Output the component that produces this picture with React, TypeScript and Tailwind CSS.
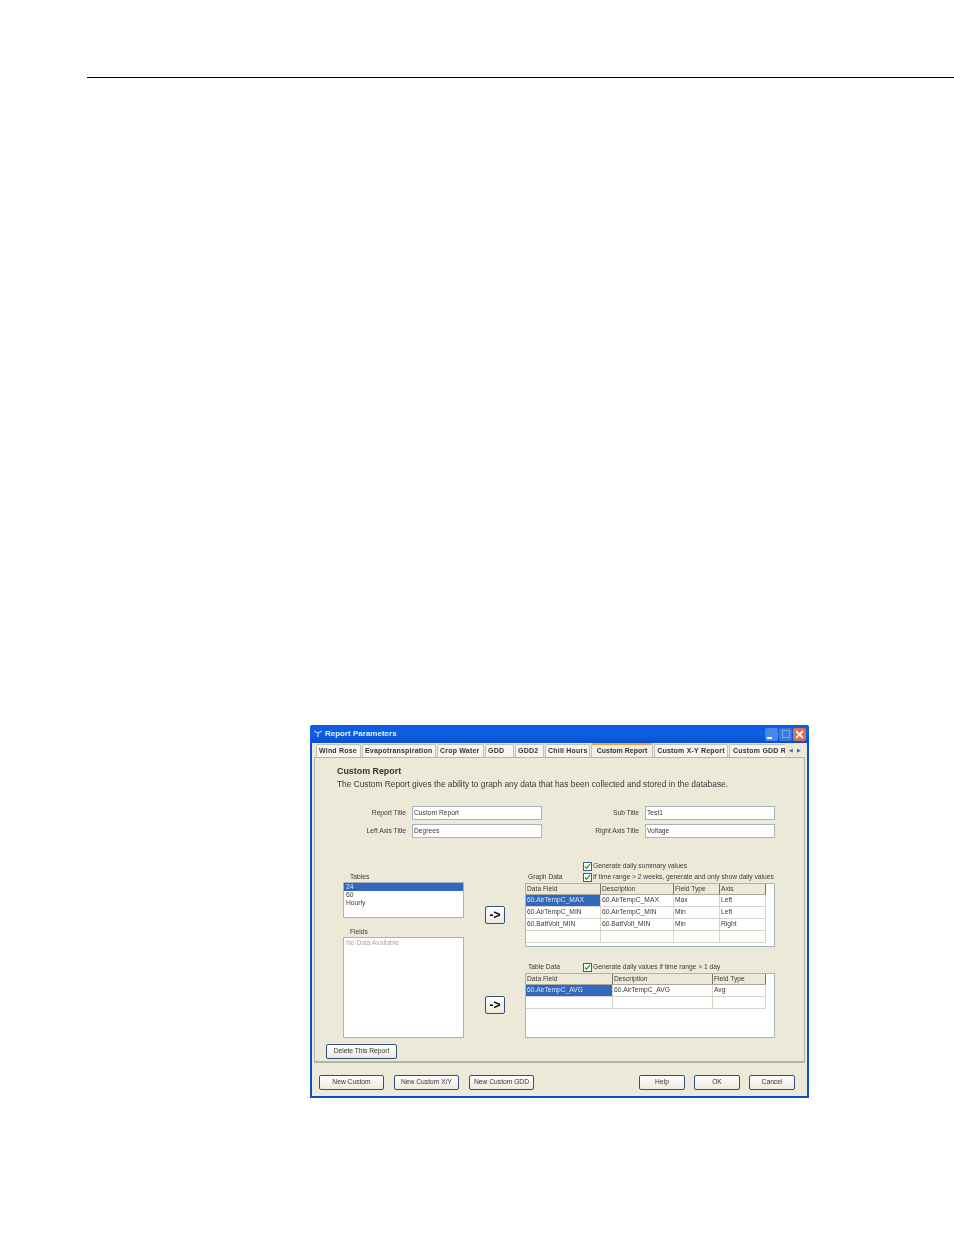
import React from 'react';

const font = "font-['Liberation_Sans',Arial,sans-serif]";

const tabs = [
  { name: 'Wind Rose', w: 'w-[45px]' },
  { name: 'Evapotranspiration', w: 'w-[74px]' },
  { name: 'Crop Water', w: 'w-[47px]' },
  { name: 'GDD', w: 'w-[29px]' },
  { name: 'GDD2', w: 'w-[29px]' },
  { name: 'Chill Hours', w: 'w-[45px]' },
];

function XpButton({ label, w }: { label: string; w: string }) {
  return (
    <button className={`${w} h-[15px] rounded-[2px] border border-[#33507a] bg-gradient-to-b from-white to-[#ece9de] text-[6.7px] leading-none text-[#333]`}>
      {label}
    </button>
  );
}

function Arrow() {
  return (
    <div className="flex h-[18px] w-[20px] items-center justify-center rounded-[2px] border border-[#33507a] bg-gradient-to-b from-white to-[#ece9de] text-[12px] font-bold leading-none text-black">
      -&gt;
    </div>
  );
}

function Field({ label, value, labelW, gap }: { label: string; value: string; labelW: string; gap: string }) {
  return (
    <div className="flex h-[14px] items-center">
      <span className={`${labelW} text-right text-[6.7px] text-[#3a3a3a]`}>{label}</span>
      <div className={`${gap} flex h-[14px] w-[130px] items-center border border-[#a5b4bd] bg-white pl-[1px] text-[6.7px] text-[#3a3a3a]`}>{value}</div>
    </div>
  );
}

function Check({ label }: { label: string }) {
  return (
    <div className="flex h-[10px] items-center gap-[1px] whitespace-nowrap text-[6.7px] text-[#3a3a3a]">
      <span className="flex h-[9px] w-[9px] items-center justify-center border border-[#3b5e86] bg-white">
        <svg viewBox="0 0 8 8" className="h-[7px] w-[7px]">
          <path d="M1 4l2 2 4-5" fill="none" stroke="#22a52e" strokeWidth="1.5" />
        </svg>
      </span>
      {label}
    </div>
  );
}

function Row({ cells, cols, first, h }: { cells: string[]; cols: string[]; first?: boolean; h: string }) {
  return (
    <div className={`flex ${h} border-b border-[#d8d5c8]`}>
      {cells.map((c, i) => (
        <div
          key={i}
          className={`${cols[i]} flex items-center border-r border-[#d8d5c8] pl-[1px] text-[6.7px] text-[#3a3a3a] ${first && i === 0 ? 'bg-[#3168bd] text-[#dfe8f5]' : ''}`}
        >
          {c}
        </div>
      ))}
    </div>
  );
}

function Grid({ header, rows, cols, height }: { header: string[]; rows: string[][]; cols: string[]; height: string }) {
  return (
    <div className={`${height} w-[250px] border border-[#a5b4bd] bg-white`}>
      <div className="w-fit">
        <div className="flex h-[11px] border-b border-[#aca899] bg-[#ece9d8]">
          {header.map((c, i) => (
            <div key={i} className={`${cols[i]} flex items-center border-r border-[#77756a] pl-[1px] text-[6.7px] text-[#3a3a3a]`}>
              {c}
            </div>
          ))}
        </div>
        {rows.map((r, i) => (
          <Row key={i} cells={r} cols={cols} first={i === 0} h="h-[12px]" />
        ))}
      </div>
    </div>
  );
}

export default function App() {
  const graphCols = ['w-[75px]', 'w-[73px]', 'w-[46px]', 'w-[46px]'];
  const tableCols = ['w-[87px]', 'w-[100px]', 'w-[53px]'];

  return (
    <div className={`h-[1235px] overflow-hidden bg-white ${font}`}>
      <div className="ml-[87px] mt-[77px] h-px bg-black" />

      <div className="ml-[310px] mt-[647px] flex h-[373px] w-[499px] flex-col rounded-t-[3px] border-x-2 border-b-2 border-[#0b4fd0] bg-[#ece9d8] blur-[0.35px]">
        {/* title bar */}
        <div className="-mx-[2px] flex h-[18px] shrink-0 items-center rounded-t-[3px] bg-gradient-to-b from-[#0a5ce0] via-[#0d60e4] to-[#0a4fd0] pl-[3px] pr-[3px]">
          <svg viewBox="0 0 10 8" className="h-[8px] w-[10px]">
            <path d="M5 7V3M1 1l4 2 4-2" fill="none" stroke="#dbe6f7" strokeWidth="1" />
          </svg>
          <span className="ml-[2px] text-[8px] font-bold text-[#e8f0fc]">Report Parameters</span>
          <div className="ml-auto flex gap-px">
            <span className="flex h-[13px] w-[13px] items-end rounded-[2px] bg-[#4a86ea] p-[2px]">
              <span className="h-[2px] w-[5px] bg-white" />
            </span>
            <span className="flex h-[13px] w-[13px] items-center justify-center rounded-[2px] bg-[#3f78dc]">
              <span className="h-[8px] w-[8px] border border-[#7fa5e6]" />
            </span>
            <span className="flex h-[13px] w-[13px] items-center justify-center rounded-[2px] bg-[#e0704c]">
              <svg viewBox="0 0 8 8" className="h-[9px] w-[9px]">
                <path d="M1 1l6 6M7 1l-6 6" stroke="white" strokeWidth="1.6" />
              </svg>
            </span>
          </div>
        </div>

        {/* tabs */}
        <div className="ml-[4px] flex h-[14px] shrink-0 items-end gap-px">
          {tabs.map(t => (
            <div key={t.name} className={`${t.w} flex h-[13px] items-center whitespace-nowrap rounded-t-[2px] border-x border-t border-[#c4c2b6] bg-[#f6f5ee] pl-[2px] text-[7px] font-bold tracking-[0.2px] text-[#333]`}>
              {t.name}
            </div>
          ))}
          <div className="relative z-10 flex h-[14px] w-[62px] items-center justify-center whitespace-nowrap rounded-t-[2px] border-x border-t-2 border-[#c4c2b6] border-t-[#e8a33a] bg-[#f1efe4] text-[7px] font-bold text-[#333]">
            Custom Report
          </div>
          <div className="flex h-[13px] w-[74px] items-center justify-center whitespace-nowrap rounded-t-[2px] border-x border-t border-[#c4c2b6] bg-[#f6f5ee] text-[7px] font-bold tracking-[0.2px] text-[#333]">
            Custom X-Y Report
          </div>
          <div className="flex h-[13px] w-[56px] items-center overflow-hidden whitespace-nowrap rounded-t-[2px] border-l border-t border-[#c4c2b6] bg-[#f6f5ee] pl-[3px] text-[7px] font-bold tracking-[0.2px] text-[#333]">
            Custom GDD R
          </div>
          <div className="flex h-[13px] w-[18px] items-center justify-center gap-[4px] text-[5px] leading-none text-[#3b62b0]">
            <span>◀</span>
            <span>▶</span>
          </div>
        </div>

        {/* panel */}
        <div className="ml-[2px] flex h-[306px] w-[491px] shrink-0 flex-col border border-b-2 border-[#b5b3a2] bg-[#ece9d8] pl-[22px]">
          <div className="mt-[8px] text-[8.9px] font-bold leading-[10px] text-[#333]">Custom Report</div>
          <div className="mt-[3px] whitespace-nowrap text-[8.35px] leading-[10px] text-[#3a3a3a]">
            The Custom Report gives the ability to graph any data that has been collected and stored in the database.
          </div>

          <div className="mt-[17px] flex">
            <div className="flex flex-col gap-[4px]">
              <Field label="Report Title" value="Custom Report" labelW="w-[69px]" gap="ml-[6px]" />
              <Field label="Left Axis Title" value="Degrees" labelW="w-[69px]" gap="ml-[6px]" />
            </div>
            <div className="ml-[33px] flex flex-col gap-[4px]">
              <Field label="Sub Title" value="Test1" labelW="w-[64px]" gap="ml-[6px]" />
              <Field label="Right Axis Title" value="Voltage" labelW="w-[64px]" gap="ml-[6px]" />
            </div>
          </div>

          <div className="mt-[24px] flex">
            {/* left lists */}
            <div className="ml-[6px] flex w-[121px] flex-col">
              <div className="mt-[10px] ml-[7px] h-[10px] text-[6.7px] leading-[10px] text-[#3a3a3a]">Tables</div>
              <div className="h-[36px] border border-[#a5b4bd] bg-white text-[6.7px] leading-[8px] text-[#3a3a3a]">
                <div className="bg-[#3168bd] pl-[2px] text-[#dfe8f5]">24</div>
                <div className="pl-[2px]">60</div>
                <div className="pl-[2px]">Hourly</div>
              </div>
              <div className="ml-[7px] mt-[9px] h-[10px] text-[6.7px] leading-[10px] text-[#3a3a3a]">Fields</div>
              <div className="h-[101px] border border-[#a5b4bd] bg-white pl-[2px] text-[6.7px] leading-[10px] text-[#aaa]">No Data Available</div>
            </div>

            {/* arrows */}
            <div className="ml-[21px] flex w-[20px] flex-col">
              <div className="mt-[44px]"><Arrow /></div>
              <div className="mt-[72px]"><Arrow /></div>
            </div>

            {/* grids */}
            <div className="ml-[20px] flex flex-col">
              <div className="flex h-[21px]">
                <span className="ml-[3px] mt-[10px] w-[55px] text-[6.7px] leading-[10px] text-[#3a3a3a]">Graph Data</span>
                <div className="-mt-px flex flex-col gap-px">
                  <Check label="Generate daily summary values" />
                  <Check label="If time range > 2 weeks, generate and only show daily values" />
                </div>
              </div>
              <Grid
                header={['Data Field', 'Description', 'Field Type', 'Axis']}
                cols={graphCols}
                height="h-[64px]"
                rows={[
                  ['60.AirTempC_MAX', '60.AirTempC_MAX', 'Max', 'Left'],
                  ['60.AirTempC_MIN', '60.AirTempC_MIN', 'Min', 'Left'],
                  ['60.BattVolt_MIN', '60.BattVolt_MIN', 'Min', 'Right'],
                  ['', '', '', ''],
                ]}
              />
              <div className="mt-[15px] flex h-[11px] items-center">
                <span className="ml-[3px] w-[55px] text-[6.7px] text-[#3a3a3a]">Table Data</span>
                <Check label="Generate daily values if time range > 1 day" />
              </div>
              <Grid
                header={['Data Field', 'Description', 'Field Type']}
                cols={tableCols}
                height="h-[65px]"
                rows={[
                  ['60.AirTempC_AVG', '60.AirTempC_AVG', 'Avg'],
                  ['', '', ''],
                ]}
              />
            </div>
          </div>

          <div className="-ml-[11px] mt-[6px] flex">
            <XpButton label="Delete This Report" w="w-[71px]" />
          </div>
        </div>

        {/* bottom buttons */}
        <div className="mt-[12px] flex pl-[7px] pr-[12px]">
          <div className="flex gap-[10px]">
            <XpButton label="New Custom" w="w-[65px]" />
            <XpButton label="New Custom X/Y" w="w-[65px]" />
            <XpButton label="New Custom GDD" w="w-[65px]" />
          </div>
          <div className="ml-auto flex gap-[9px]">
            <XpButton label="Help" w="w-[46px]" />
            <XpButton label="OK" w="w-[46px]" />
            <XpButton label="Cancel" w="w-[46px]" />
          </div>
        </div>
      </div>
    </div>
  );
}
